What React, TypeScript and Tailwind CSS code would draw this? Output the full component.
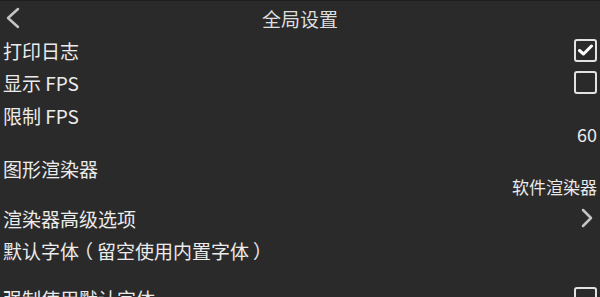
import React from 'react';

const font = { fontFamily: '"Noto Sans CJK SC", "Noto Sans", sans-serif' };

const Checkbox = ({ checked }: { checked: boolean }) => (
  <div className="w-[23px] h-[23px] rounded-[3px] border-2 border-[#e2e2e2] flex items-center justify-center">
    {checked && (
      <svg width="15" height="12" viewBox="0 0 15 12" fill="none">
        <path d="M1.5 6.5 L5.5 10 L13.5 2" stroke="#ffffff" strokeWidth="3" strokeLinecap="round" strokeLinejoin="round" />
      </svg>
    )}
  </div>
);

export default function App() {
  return (
    <div className="w-[600px] h-[297px] overflow-hidden bg-[#2a2a2a] text-[#ebebeb] border-t border-[#1e1e1e]" style={font}>
      {/* Header */}
      <div className="relative h-[33px] flex items-center justify-center">
        <svg className="absolute left-[4px] top-[6px]" width="17" height="22" viewBox="0 0 17 22" fill="none">
          <path d="M14 2 L4 11 L14 20" stroke="#c4c4c4" strokeWidth="2.5" strokeLinecap="round" strokeLinejoin="round" />
        </svg>
        <span className="text-[19px] leading-none text-[#dedede] mt-[2px]">全局设置</span>
      </div>

      {/* 打印日志 */}
      <div className="h-[32px] flex items-center justify-between pl-[3px] pr-[3px]">
        <span className="text-[19px] leading-none">打印日志</span>
        <Checkbox checked />
      </div>

      {/* 显示 FPS */}
      <div className="h-[32px] flex items-center justify-between pl-[3px] pr-[3px]">
        <span className="text-[19px] leading-none">显示 FPS</span>
        <Checkbox checked={false} />
      </div>

      {/* 限制 FPS */}
      <div className="flex flex-col pl-[3px] pr-[3px] pt-[9px] pb-[8px]">
        <div className="h-[18px] flex items-center text-[19px]">限制 FPS</div>
        <div className="h-[18px] flex items-center justify-end text-[18px]">60</div>
      </div>

      {/* 图形渲染器 */}
      <div className="flex flex-col pl-[3px] pr-[3px] pt-[9px] pb-[6px]">
        <div className="h-[18px] flex items-center text-[19px]">图形渲染器</div>
        <div className="h-[18px] flex items-center justify-end text-[17px]">软件渲染器</div>
      </div>

      {/* 渲染器高级选项 */}
      <div className="h-[32px] flex items-center justify-between pl-[3px] pr-[3px]">
        <span className="text-[19px] leading-none">渲染器高级选项</span>
        <svg width="14" height="22" viewBox="0 0 14 22" fill="none" className="mr-[3px]">
          <path d="M3 3 L11 11 L3 19" stroke="#c4c4c4" strokeWidth="2.5" strokeLinecap="round" strokeLinejoin="round" />
        </svg>
      </div>

      {/* 默认字体 */}
      <div className="flex flex-col pl-[3px] pr-[3px] pt-[8px]">
        <div className="h-[18px] flex items-center text-[19px] whitespace-nowrap [text-spacing-trim:space-all]">
          <span>默认字</span>
          <span className="tracking-[-5px]">体</span>
          <span className="tracking-[4px]">（</span>
          <span>留空使用内置字</span>
          <span className="tracking-[4px]">体</span>
          <span>）</span>
        </div>
        <div className="h-[18px]" />
      </div>

      {/* 强制使用默认字体 */}
      <div className="h-[32px] flex items-center justify-between pl-[3px] pr-[3px] pt-[8px]">
        <span className="text-[19px] leading-none">强制使用默认字体</span>
        <Checkbox checked={false} />
      </div>
    </div>
  );
}
